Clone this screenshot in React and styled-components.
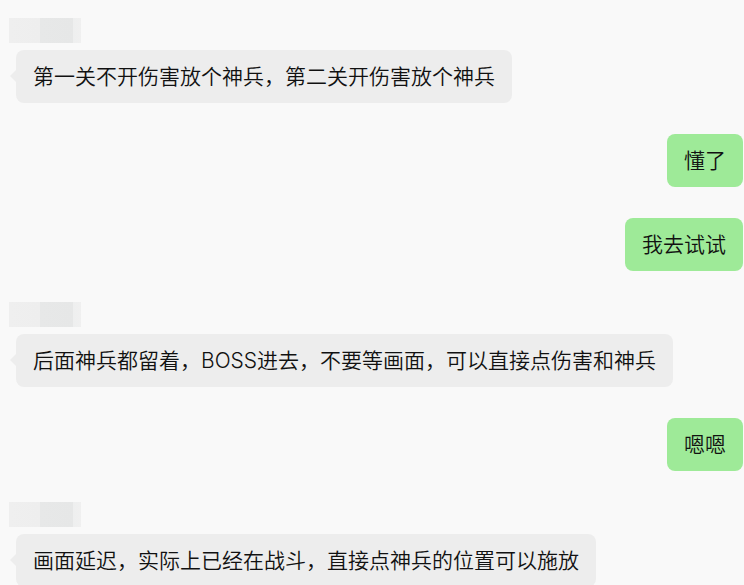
import React from "react";
import styled, { createGlobalStyle } from "styled-components";

const Global = createGlobalStyle`
  html, body {
    margin: 0;
    padding: 0;
    background: #f9f9f9;
  }
  body {
    font-family: Inter, "Noto Sans CJK SC", sans-serif;
    color: #111111;
    overflow: hidden;
  }
`;

const Chat = styled.div`
  width: 744px;
  height: 585px;
  box-sizing: border-box;
  padding-top: 18px;
  display: flex;
  flex-direction: column;
  gap: 31px;
  background: #f9f9f9;
  overflow: hidden;
`;

const Incoming = styled.div`
  display: flex;
  flex-direction: column;
  align-items: flex-start;
  gap: 7px;
`;

const Outgoing = styled.div`
  display: flex;
  justify-content: flex-end;
  padding-right: 1px;
`;

/* pixelated sender name */
const NameMask = styled.div`
  margin-left: 9px;
  width: 72px;
  height: 25px;
  background: linear-gradient(
    to right,
    #efefef 0,
    #eeeeee 31px,
    #e7e8e8 31px,
    #e6e7e7 64px,
    #eeefef 64px,
    #f0f0f0 72px
  );
`;

const Bubble = styled.div`
  position: relative;
  box-sizing: border-box;
  padding: 11px 17px;
  font-size: 21px;
  font-weight: 350;
  line-height: 31px;
  white-space: nowrap;
  border-radius: 8px;
  background: ${(p) => (p.$mine ? "#9eea98" : "#ededed")};
  margin-left: ${(p) => (p.$mine ? "0" : "16px")};

  ${(p) =>
    !p.$mine &&
    `
    &::before {
      content: "";
      position: absolute;
      left: -6px;
      top: 20px;
      border-style: solid;
      border-width: 6px 6px 6px 0;
      border-color: transparent #ededed transparent transparent;
    }
  `}
`;

const messages = [
  { mine: false, text: "第一关不开伤害放个神兵，第二关开伤害放个神兵" },
  { mine: true, text: "懂了" },
  { mine: true, text: "我去试试" },
  { mine: false, text: "后面神兵都留着，BOSS进去，不要等画面，可以直接点伤害和神兵" },
  { mine: true, text: "嗯嗯" },
  { mine: false, text: "画面延迟，实际上已经在战斗，直接点神兵的位置可以施放" },
];

export default function App() {
  return (
    <>
      <Global />
      <Chat>
        {messages.map((m, i) =>
          m.mine ? (
            <Outgoing key={i}>
              <Bubble $mine>{m.text}</Bubble>
            </Outgoing>
          ) : (
            <Incoming key={i}>
              <NameMask />
              <Bubble>{m.text}</Bubble>
            </Incoming>
          )
        )}
      </Chat>
    </>
  );
}
